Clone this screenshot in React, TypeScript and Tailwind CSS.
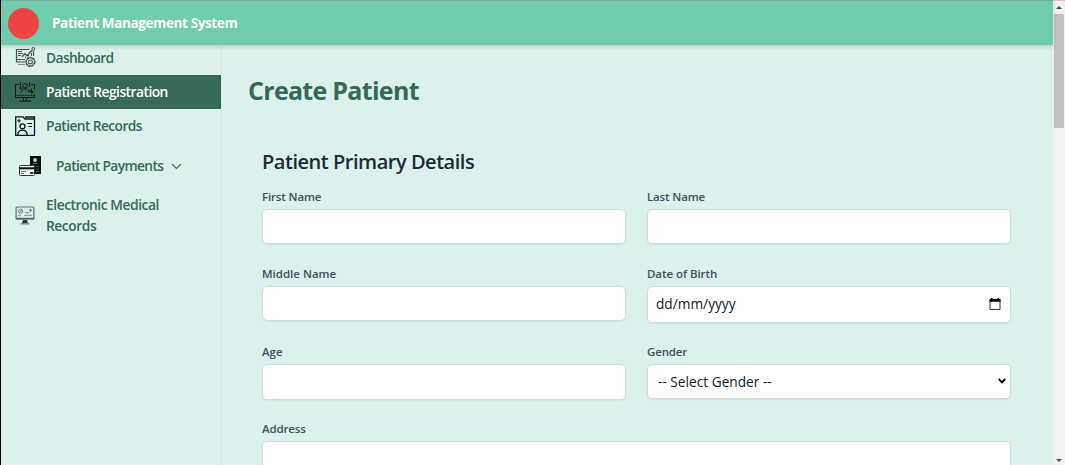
import type { ReactNode } from "react";

const font = "font-['Open_Sans','Noto_Sans',sans-serif]";

function DashboardIcon() {
  return (
    <svg width="21" height="21" viewBox="0 0 21 21" fill="none" stroke="#46544f" strokeWidth="1" className="shrink-0">
      <path d="M14.5 2.5H1.5v12.5H10M18.5 4v5M1.5 12.5H10" strokeWidth="1.2" />
      <path d="M3 4.5h4M3 6.5h5M3 8.5h3" strokeWidth="1.2" />
      <path d="M7 9.8l3-3 2 2 5-5.5" strokeWidth="1.4" />
      <path d="M10.5 11V9.5M13.5 9.5V8M16.5 9V6" />
      <circle cx="18.3" cy="1.9" r="1.4" />
      <circle cx="15.4" cy="14.9" r="4.3" strokeWidth="1.7" strokeDasharray="2.6 .5" />
      <circle cx="15.4" cy="14.9" r="1.9" strokeWidth="1.2" />
      <path d="M3 17.5h7" strokeWidth=".6" />
    </svg>
  );
}

function RegistrationIcon() {
  return (
    <svg width="21" height="21" viewBox="0 0 21 21" fill="none" stroke="#0d1a16" strokeWidth="1" className="shrink-0">
      <path d="M4 2.5H.5v13h19v-3M16 2.5h3.5v5" />
      <path d="M.5 13.5h19" strokeWidth=".6" />
      <path d="M8.5 15.5v3M11.5 15.5v3M4.5 19h12" />
      <path d="M5.5 0v7M4 5.5L5.5 7 7 5.5M14.5 0v5" />
      <circle cx="10" cy="3.8" r="2.3" />
      <path d="M6 10.5c0-5 8-5 8 0" />
      <path d="M16.5 6.5v6M13.5 9.5h6M14.5 7.5l4 4" strokeWidth=".8" />
    </svg>
  );
}

function RecordsIcon() {
  return (
    <svg width="21" height="21" viewBox="0 0 21 21" fill="none" stroke="#101816" strokeWidth="1.3" className="shrink-0">
      <path d="M.7 19.4V.8H8l2 2.2h9.5v16.4z" />
      <path d="M10 1h9.5v2" />
      <path d="M4 3v3.4M2.3 4.7h3.4" strokeWidth="1.1" />
      <circle cx="7.5" cy="10.3" r="2.5" />
      <path d="M2.8 19c0-6.6 9.4-6.6 9.4 0" />
      <path d="M12.5 7.5H17M13.5 10.5H17" strokeWidth="1" />
    </svg>
  );
}

function PaymentsIcon() {
  return (
    <svg width="23" height="21" viewBox="0 0 23 21" className="shrink-0">
      <path d="M11 0h11v18h-7V9h-4z" fill="#080c0b" />
      <circle cx="16" cy="4" r="2" fill="#b9c8c3" />
      <path d="M13.5 7.5h5M17 10.5h3M17 13h3M17 15.5h3" stroke="#87918e" strokeWidth=".6" />
      <rect x=".5" y="9.5" width="15" height="10" rx="1" fill="#e6f2ee" stroke="#303a37" />
      <path d="M.5 12.3h15" stroke="#080c0b" strokeWidth="2" />
      <path d="M2 15.5h5M2 17.5h3" stroke="#65716d" strokeWidth=".8" />
      <path d="M11 17h3.5" stroke="#101816" strokeWidth="1.6" />
    </svg>
  );
}

function MedicalIcon() {
  return (
    <svg width="20" height="20" viewBox="0 0 20 20" className="shrink-0">
      <rect x="1.1" y="1" width="17.8" height="12" rx="1" fill="#dcebe8" stroke="#5d747a" strokeWidth="1.2" />
      <path d="M.8 12.6h18.4" stroke="#51666d" strokeWidth="1.6" />
      <circle cx="5.5" cy="5.2" r="2.1" fill="none" stroke="#70898d" />
      <path d="M4.5 5l1 1.2L7 3.7M3 9.3h3M9 9.3h8M10 6.6h4" fill="none" stroke="#70898d" strokeWidth=".9" />
      <path d="M15.5 2.8v3M14 4.3h3" stroke="#50676f" strokeWidth=".8" />
      <path d="M8 14h4l.9 3H7.1z" fill="#26394a" />
      <path d="M5.5 17.8h9" stroke="#62777e" strokeWidth="1.2" />
    </svg>
  );
}

function Field({ label, tracking, className = "", children }: { label: string; tracking: string; className?: string; children: ReactNode }) {
  return (
    <div className={`flex flex-col ${className}`}>
      <label className={`mb-1 block h-[17px] text-[11.5px] leading-[17px] font-semibold text-[#425060] ${tracking}`}>
        <span>{label}</span>
      </label>
      {children}
    </div>
  );
}

const box = "w-full rounded-[5px] border border-[#d4dadb] bg-white shadow-[0_1px_2px_rgba(0,0,0,0.06)] outline-none";

export default function App() {
  return (
    <div className={`flex h-[465px] w-[1065px] overflow-hidden border-l border-black bg-[#dcf1eb] ${font}`}>
      <div className="flex w-[1052px] shrink-0 flex-col">
        <header className="relative z-10 flex h-[45px] shrink-0 items-center border-t border-[#80aa97] bg-[#6fcdae] pl-[7px] shadow-[0_2px_4px_rgba(0,0,0,0.15)]">
          <div className="size-[31px] rounded-full bg-[#ef4444]" />
          <h1 className="ml-[13px] text-[13.6px] font-bold tracking-[-0.43px] whitespace-nowrap text-white">
            <span>Patient Management System</span>
          </h1>
        </header>
        <div className="flex min-h-0 flex-1">
          <nav className="flex w-[221px] shrink-0 flex-col border-r border-[#d2e7e1] text-[13.8px] font-semibold whitespace-nowrap text-[#386a58]">
            <a className="flex h-[30px] items-center gap-[10px] pb-[4px] pl-[14px]">
              <span className="-mt-[2px]">
                <DashboardIcon />
              </span>
              <span className="tracking-[-0.62px]">Dashboard</span>
            </a>
            <a className="flex h-[34px] items-center gap-[10px] bg-[#366958] pt-px pl-[14px] text-white">
              <RegistrationIcon />
              <span className="tracking-[-0.53px]">Patient Registration</span>
            </a>
            <a className="flex h-[34px] items-center gap-[10px] pt-px pl-[14px]">
              <RecordsIcon />
              <span className="tracking-[-0.6px]">Patient Records</span>
            </a>
            <a className="flex h-[46px] items-center pl-[18px]">
              <PaymentsIcon />
              <span className="ml-[14px] tracking-[-0.63px]">Patient Payments</span>
              <svg width="11" height="7" viewBox="0 0 11 7" fill="none" stroke="#386a58" strokeWidth="1.1" className="ml-[8px]">
                <path d="M1 1l4.5 4.5L10 1" />
              </svg>
            </a>
            <a className="flex h-[52px] items-center gap-[11px] pl-[14px]">
              <span className="pt-[2px]">
                <MedicalIcon />
              </span>
              <span className="leading-[21px] tracking-[-0.45px]">
                Electronic Medical
                <br />
                Records
              </span>
            </a>
          </nav>
          <main className="min-w-0 flex-1 overflow-hidden pl-[26px]">
            <h2 className="mt-[29px] h-[32px] text-[25px] leading-[32px] font-bold tracking-[-0.7px] text-[#366958]">
              <span>Create Patient</span>
            </h2>
            <form className="mt-[41px] ml-[14px] w-[749px]">
              <h3 className="h-[30px] text-[20px] leading-[30px] font-semibold tracking-[-0.47px] text-[#1f2937]">
                <span>Patient Primary Details</span>
              </h3>
              <div className="mt-[11px] grid grid-cols-[364px_364px] grid-rows-[77px_78px_77px_80px] gap-x-[21px]">
                <Field label="First Name" tracking="tracking-[-0.15px]">
                  <input className={`${box} h-[35px]`} />
                </Field>
                <Field label="Last Name" tracking="tracking-[-0.15px]">
                  <input className={`${box} h-[35px]`} />
                </Field>
                <Field label="Middle Name" tracking="tracking-[0px]">
                  <input className={`${box} h-[35px]`} />
                </Field>
                <Field label="Date of Birth" tracking="tracking-[-0.06px]">
                  <div className={`${box} flex h-[37px] items-center justify-between pr-[9px] pl-[8px] text-[13.7px] text-[#111827]`}>
                    <span className="tracking-[0px]">dd/mm/yyyy</span>
                    <svg width="12" height="13" viewBox="0 0 12 13" fill="none">
                      <path d="M1 2.5h10v9H1z" stroke="#333" strokeWidth="1" />
                      <path d="M.5 1h11v2.8H.5zM2 0h1.5v2H2zM8.5 0H10v2H8.5z" fill="#000" />
                    </svg>
                  </div>
                </Field>
                <Field label="Age" tracking="tracking-[0px]">
                  <input className={`${box} h-[36px]`} />
                </Field>
                <Field label="Gender" tracking="tracking-[-0.15px]">
                  <div className={`${box} flex h-[35px] items-center justify-between pt-px pr-[4px] pl-[10px] text-[13.7px] text-[#111827]`}>
                    <span className="tracking-[0px]">-- Select Gender --</span>
                    <svg width="8" height="6" viewBox="0 0 8 6" fill="none" stroke="#000" strokeWidth="1.9" className="-mt-[2px]">
                      <path d="M.8 1L4 4.3 7.2 1" />
                    </svg>
                  </div>
                </Field>
                <Field label="Address" tracking="tracking-[-0.15px]" className="col-span-2">
                  <input className={`${box} h-[36px]`} />
                </Field>
              </div>
            </form>
          </main>
        </div>
      </div>
      <div className="flex w-[12px] shrink-0 flex-col items-center justify-between border-t border-[#d5c3be] bg-[#f0f0f0]">
        <div className="flex flex-col items-center">
          <svg width="6" height="13" viewBox="0 0 6 13">
            <path d="M0 8l3-3 3 3z" fill="#505050" />
          </svg>
          <div className="h-[114px] w-[10px] bg-[#c1c1c1]" />
        </div>
        <svg width="6" height="8" viewBox="0 0 6 8">
          <path d="M0 2h6L3 5z" fill="#505050" />
        </svg>
      </div>
    </div>
  );
}
